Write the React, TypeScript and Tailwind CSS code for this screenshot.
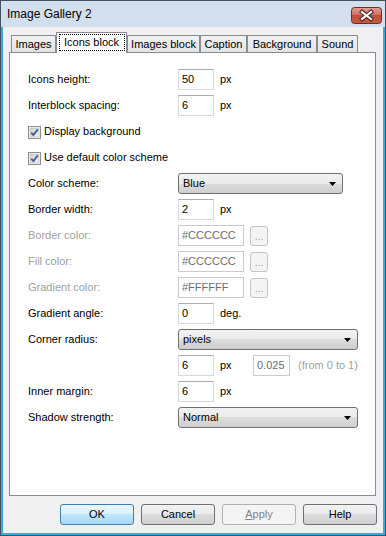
import React from 'react'

const TABS = [
  { label: 'Images', w: 'w-[45px]' },
  { label: 'Icons block', w: 'w-[71px]', active: true },
  { label: 'Images block', w: 'w-[73px]' },
  { label: 'Caption', w: 'w-[47px]' },
  { label: 'Background', w: 'w-[70px]' },
  { label: 'Sound', w: 'w-[41px]' },
]

function TextBox({ value, w = 'w-[36px]', disabled = false }: { value: string; w?: string; disabled?: boolean }) {
  return (
    <div
      className={`${w} h-[21px] shrink-0 flex items-center px-[3px] bg-white border ${
        disabled
          ? 'border-[#c9cbcf] text-[#6d6d6d]'
          : 'border-[#d5d9e0] border-t-[#abadb3] text-black'
      }`}
    >
      {value}
    </div>
  )
}

function Unit({ children }: { children: React.ReactNode }) {
  return <span className="ml-[6px]">{children}</span>
}

function DotsButton() {
  return (
    <div className="ml-[6px] w-[18px] h-[20px] rounded-[3px] border border-[#c2c5c9] bg-[#f4f4f4] text-[#a0a0a0] flex items-end justify-center pb-[3px] leading-none text-[10px]">
      ...
    </div>
  )
}

function Select({ value, w }: { value: string; w: string }) {
  return (
    <div
      className={`${w} h-[21px] rounded-[3px] border border-[#707070] bg-[linear-gradient(#f2f2f2_0%,#ebebeb_50%,#dddddd_50%,#cfcfcf_100%)] flex items-center pl-[4px] pr-[6px]`}
    >
      <span className="flex-1">{value}</span>
      <svg width="7" height="4" viewBox="0 0 7 4">
        <path d="M0 0 H7 L3.5 4 Z" fill="#000" />
      </svg>
    </div>
  )
}

function CheckBox({ label }: { label: string }) {
  return (
    <div className="flex items-center h-[21px]">
      <svg width="13" height="13" viewBox="0 0 13 13" className="mt-[2px]">
        <defs>
          <linearGradient id="cbg" x1="0" y1="0" x2="1" y2="1">
            <stop offset="0" stopColor="#cbcfd5" />
            <stop offset="1" stopColor="#f6f6f6" />
          </linearGradient>
        </defs>
        <rect x="0.5" y="0.5" width="12" height="12" fill="#fff" stroke="#8e8f8f" />
        <rect x="2" y="2" width="9" height="9" fill="url(#cbg)" stroke="#aeb3b9" strokeWidth="0.6" />
        <path d="M3.2 6.6 L5.4 9 L9.8 3.4" fill="none" stroke="#4a5f97" strokeWidth="1.9" />
      </svg>
      <span className="ml-[3px]">{label}</span>
    </div>
  )
}

function Row({ label, disabled = false, children }: { label: string; disabled?: boolean; children?: React.ReactNode }) {
  return (
    <div className="flex items-center h-[21px]">
      <span className={`w-[150px] shrink-0 ${disabled ? 'text-[#a0a0a0]' : 'text-black'}`}>{label}</span>
      {children}
    </div>
  )
}

function Button({ label, kind }: { label: React.ReactNode; kind?: 'default' | 'disabled' }) {
  const cls =
    kind === 'default'
      ? 'border-[#3c7fb1] bg-[linear-gradient(#eaf6fd_0%,#d9f0fc_50%,#bee6fd_50%,#a7d9f5_100%)] text-black'
      : kind === 'disabled'
        ? 'border-[#adb2b5] bg-[#f4f4f4] text-[#838383]'
        : 'border-[#707070] bg-[linear-gradient(#f2f2f2_0%,#ebebeb_50%,#dddddd_50%,#cfcfcf_100%)] text-black'
  return (
    <div className={`w-[74px] h-[21px] rounded-[3px] border flex items-center justify-center ${cls}`}>
      {label}
    </div>
  )
}

function CloseButton() {
  return (
    <svg width="31" height="17" viewBox="0 0 31 17">
      <defs>
        <linearGradient id="closeg" x1="0" y1="0" x2="0" y2="1">
          <stop offset="0" stopColor="#e0a197" />
          <stop offset="0.45" stopColor="#cf7363" />
          <stop offset="0.5" stopColor="#c0503b" />
          <stop offset="1" stopColor="#c9593f" />
        </linearGradient>
      </defs>
      <rect x="0.5" y="0.5" width="30" height="16" rx="3" fill="url(#closeg)" stroke="#6b2d27" />
      <path d="M11 5 L20 12 M20 5 L11 12" stroke="#4b2320" strokeWidth="4.2" strokeLinecap="square" />
      <path d="M11 5 L20 12 M20 5 L11 12" stroke="#fff" strokeWidth="2.2" strokeLinecap="square" />
    </svg>
  )
}

export default function App() {
  return (
    <div className="w-[386px] h-[536px] flex flex-col border border-[#44505f] bg-[linear-gradient(#d3dfec,#c3d3e6)] font-['Liberation_Sans',Arial,sans-serif] text-[11px] text-black">
      <div className="h-[26px] shrink-0 flex items-center pl-[6px] pr-[3px]">
        <span className="text-[12px]">Image Gallery 2</span>
        <div className="ml-auto mt-[2px]">
          <CloseButton />
        </div>
      </div>

      <div className="flex-1 flex flex-col bg-[#f0f0f0] border-x-2 border-b-2 border-[#3aa9dc] pt-[5px]">
        <div className="h-[20px] flex items-end pl-[8px] relative z-10">
          {TABS.map((t) =>
            t.active ? (
              <div
                key={t.label}
                className={`${t.w} h-[21px] -mb-px bg-white border border-b-0 border-[#898c95] flex items-start justify-center pt-[1px]`}
              >
                <span className="border border-dotted border-black px-[2px] w-[66px] h-[17px] flex items-center justify-center">
                  {t.label}
                </span>
              </div>
            ) : (
              <div
                key={t.label}
                className={`${t.w} h-[17px] border border-b-0 border-[#898c95] bg-[linear-gradient(#f2f2f2,#e3e3e3)] flex items-center justify-center`}
              >
                {t.label}
              </div>
            ),
          )}
        </div>

        <div className="ml-[6px] w-[367px] h-[444px] border border-[#898c95] bg-white pt-[16px] pl-[18px] flex flex-col gap-[5px]">
          <Row label="Icons height:">
            <TextBox value="50" />
            <Unit>px</Unit>
          </Row>
          <Row label="Interblock spacing:">
            <TextBox value="6" />
            <Unit>px</Unit>
          </Row>
          <CheckBox label="Display background" />
          <CheckBox label="Use default color scheme" />
          <Row label="Color scheme:">
            <Select value="Blue" w="w-[165px]" />
          </Row>
          <Row label="Border width:">
            <TextBox value="2" />
            <Unit>px</Unit>
          </Row>
          <Row label="Border color:" disabled>
            <TextBox value="#CCCCCC" w="w-[66px]" disabled />
            <DotsButton />
          </Row>
          <Row label="Fill color:" disabled>
            <TextBox value="#CCCCCC" w="w-[66px]" disabled />
            <DotsButton />
          </Row>
          <Row label="Gradient color:" disabled>
            <TextBox value="#FFFFFF" w="w-[66px]" disabled />
            <DotsButton />
          </Row>
          <Row label="Gradient angle:">
            <TextBox value="0" />
            <Unit>deg.</Unit>
          </Row>
          <Row label="Corner radius:">
            <Select value="pixels" w="w-[180px]" />
          </Row>
          <Row label="">
            <TextBox value="6" />
            <span className="ml-[6px] w-[33px]">px</span>
            <TextBox value="0.025" w="w-[37px]" disabled />
            <span className="ml-[8px] text-[#a0a0a0]">(from 0 to 1)</span>
          </Row>
          <Row label="Inner margin:">
            <TextBox value="6" />
            <Unit>px</Unit>
          </Row>
          <Row label="Shadow strength:">
            <Select value="Normal" w="w-[180px]" />
          </Row>
        </div>

        <div className="mt-[8px] flex justify-end gap-[7px] pr-[6px]">
          <Button label="OK" kind="default" />
          <Button label="Cancel" />
          <Button
            label={
              <span>
                <span className="underline">A</span>pply
              </span>
            }
            kind="disabled"
          />
          <Button label="Help" />
        </div>
      </div>
    </div>
  )
}
